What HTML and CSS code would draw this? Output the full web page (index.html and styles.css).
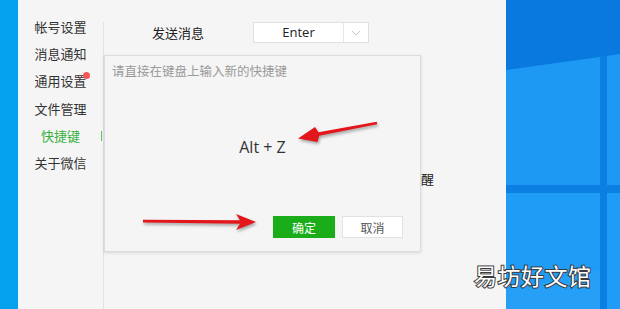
FILE: index.html
```html
<!DOCTYPE html>
<html lang="zh-CN">
<head>
    <meta charset="UTF-8">
    <meta name="viewport" content="width=device-width, initial-scale=1.0">
    <title>快捷键设置</title>
    <link rel="stylesheet" href="styles.css">
</head>
<body>

<div class="screen">
    <div class="strip"></div>

    <div class="app">
        <ul class="menu">
            <li>帐号设置</li>
            <li>消息通知</li>
            <li class="has-dot">通用设置</li>
            <li>文件管理</li>
            <li class="active">快捷键</li>
            <li>关于微信</li>
        </ul>

        <div class="content">
            <div class="row">
                <span class="label">发送消息</span>
                <div class="select">
                    <span class="select-value">Enter</span>
                    <span class="select-arrow">
                        <svg width="10" height="6" viewBox="0 0 10 6"><path d="M1 1 L5 5 L9 1" fill="none" stroke="#c8c8c8" stroke-width="1"/></svg>
                    </span>
                </div>
            </div>
            <div class="row hidden-row">
                <span class="label">新消息提醒</span>
            </div>
        </div>
    </div>

    <div class="desktop">
        <svg width="114" height="309" viewBox="0 0 114 309">
            <rect width="114" height="309" fill="#0c7fe2"/>
            <polygon points="0,0 114,0 114,54 0,70" fill="#0a79df"/>
            <polygon points="0,70 94,57 94,185 0,185" fill="#1d99f4"/>
            <polygon points="101,56 114,54 114,185 101,185" fill="#1d99f4"/>
            <polygon points="0,193 94,193 94,309 0,309" fill="#1f9cf5"/>
            <polygon points="101,193 114,193 114,309 101,309" fill="#1f9cf5"/>
            <polygon points="0,290 94,270 94,309 0,309" fill="#2aa3f7" opacity="0.6"/>
        </svg>
    </div>

    <div class="dialog">
        <div class="dialog-title">请直接在键盘上输入新的快捷键</div>
        <div class="dialog-body">Alt + Z</div>
        <div class="dialog-footer">
            <button class="btn btn-ok">确定</button>
            <button class="btn btn-cancel">取消</button>
        </div>
    </div>

    <svg class="arrows" width="620" height="309" viewBox="0 0 620 309">
        <polygon points="376.8,121.8 318.5,132.3 315,127 298,138.5 317.5,142 319.2,135.7 377.2,124.2" fill="#e3161b"/>
        <polygon points="143,219.8 240,220.3 236,214 256,222 236,230 240,223.7 143,222.4" fill="#e3161b"/>
    </svg>

    <div class="watermark">易坊好文馆</div>
</div>

</body>
</html>
```

FILE: styles.css
```css
* {
    box-sizing: border-box;
}

body {
    margin: 0;
    font-family: "Noto Sans CJK SC", "Noto Sans", sans-serif;
    color: #333;
}

.screen {
    position: relative;
    display: flex;
    width: 620px;
    height: 309px;
    overflow: hidden;
}

.strip {
    width: 18px;
    background-color: #03a1ee;
}

.app {
    display: flex;
    width: 488px;
    background-color: #f5f5f5;
}

.menu {
    list-style: none;
    margin: 0;
    padding: 13px 0 0;
    width: 85px;
}

.menu li {
    position: relative;
    height: 27.2px;
    line-height: 27px;
    text-align: center;
    font-size: 13px;
    color: #333;
}

.menu li.has-dot::after {
    content: "";
    position: absolute;
    left: 65px;
    top: 5px;
    width: 7px;
    height: 7px;
    border-radius: 50%;
    background-color: #f25555;
}

.menu li.active {
    color: #3ab13f;
}

.menu li.active::after {
    content: "";
    position: absolute;
    right: 1px;
    top: 9px;
    width: 1px;
    height: 10px;
    background-color: #5fc05f;
}

.content {
    flex: 1;
    margin-top: 22px;
    border-left: 1px solid #e2e2e2;
}

.row {
    display: flex;
    align-items: center;
    padding-left: 48px;
}

.label {
    width: 101px;
    font-size: 13px;
    color: #222;
}

.select {
    display: flex;
    width: 116px;
    height: 21px;
    background-color: #fff;
    border: 1px solid #e0e0e0;
}

.select-value {
    width: 89px;
    line-height: 19px;
    text-align: center;
    font-family: "Open Sans", "Noto Sans", sans-serif;
    font-size: 13px;
    color: #222;
}

.select-arrow {
    flex: 1;
    display: flex;
    align-items: center;
    justify-content: center;
    border-left: 1px solid #e6e6e6;
}

.hidden-row {
    margin-top: 126px;
    padding-left: 265px;
}

.desktop {
    flex: 1;
    display: flex;
}

.dialog {
    position: absolute;
    left: 104px;
    top: 55px;
    width: 317px;
    height: 197px;
    display: flex;
    flex-direction: column;
    background-color: #f5f5f5;
    border: 1px solid #dcdcdc;
    box-shadow: 0 1px 3px rgba(0, 0, 0, 0.12);
}

.dialog-title {
    height: 29px;
    line-height: 29px;
    padding-left: 7px;
    font-size: 12.5px;
    color: #9a9a9a;
}

.dialog-body {
    height: 124px;
    display: flex;
    align-items: center;
    justify-content: center;
    font-family: "Open Sans", "Noto Sans", sans-serif;
    font-size: 16px;
    color: #333;
}

.dialog-footer {
    display: flex;
    justify-content: flex-end;
    gap: 7px;
    padding: 7px 17px 0 0;
}

.btn {
    height: 22px;
    padding: 0;
    border: 1px solid transparent;
    font-family: "Noto Sans CJK SC", sans-serif;
    font-size: 12px;
}

.btn-ok {
    width: 62px;
    background-color: #1aad19;
    color: #fff;
}

.btn-cancel {
    width: 61px;
    background-color: #fff;
    border-color: #e2e2e2;
    color: #555;
}

.arrows {
    position: absolute;
    left: 0;
    top: 0;
    pointer-events: none;
    filter: drop-shadow(1px 2px 1.5px rgba(0, 0, 0, 0.35));
}

.watermark {
    position: absolute;
    left: 474px;
    top: 258px;
    font-size: 23px;
    color: #fff;
    -webkit-text-stroke: 2px #3a3a3a;
    paint-order: stroke fill;
    letter-spacing: 0.5px;
}
```
